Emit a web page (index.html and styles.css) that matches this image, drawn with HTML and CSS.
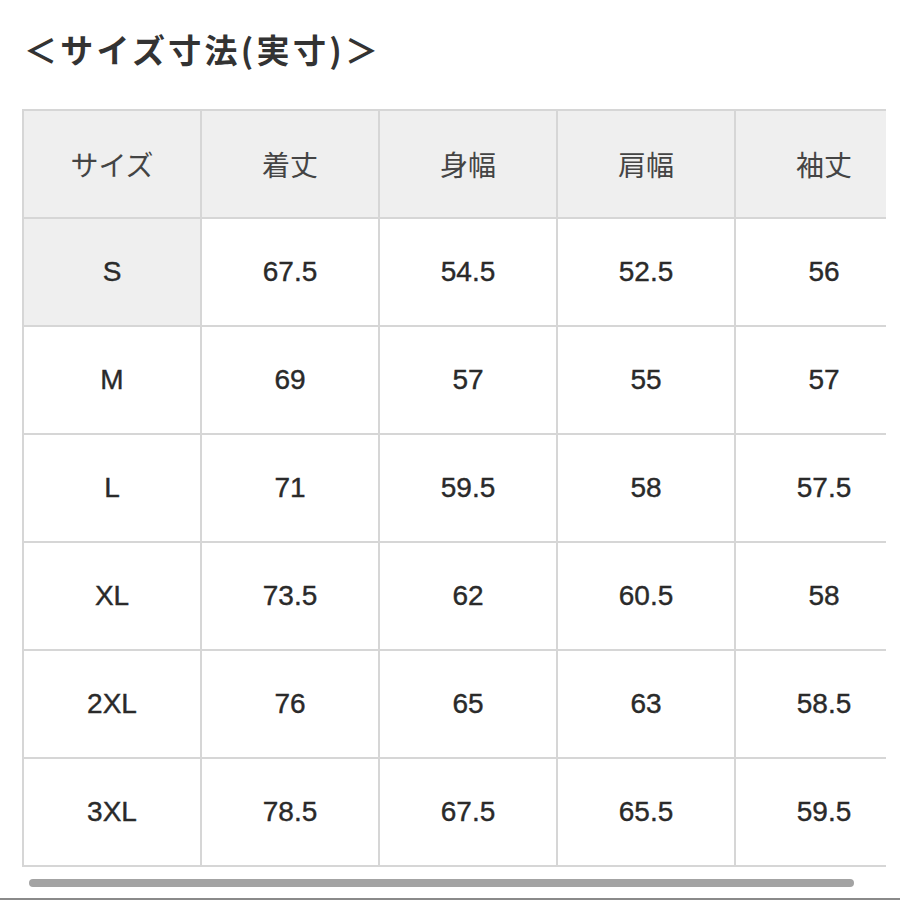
FILE: index.html
```html
<!DOCTYPE html>
<html lang="ja">
<head>
<meta charset="utf-8">
<title>サイズ寸法</title>
<link rel="stylesheet" href="styles.css">
</head>
<body>
<div class="page">
  <h1 class="title">＜サイズ寸法(実寸)＞</h1>
  <div class="scroller">
    <table class="sizes">
      <thead>
        <tr><th>サイズ</th><th>着丈</th><th>身幅</th><th>肩幅</th><th>袖丈</th></tr>
      </thead>
      <tbody>
        <tr><td class="first shaded">S</td><td>67.5</td><td>54.5</td><td>52.5</td><td>56</td></tr>
        <tr><td class="first">M</td><td>69</td><td>57</td><td>55</td><td>57</td></tr>
        <tr><td class="first">L</td><td>71</td><td>59.5</td><td>58</td><td>57.5</td></tr>
        <tr><td class="first">XL</td><td>73.5</td><td>62</td><td>60.5</td><td>58</td></tr>
        <tr><td class="first">2XL</td><td>76</td><td>65</td><td>63</td><td>58.5</td></tr>
        <tr><td class="first">3XL</td><td>78.5</td><td>67.5</td><td>65.5</td><td>59.5</td></tr>
      </tbody>
    </table>
  </div>
  <div class="scrollbar"></div>
</div>
<div class="bottom-line"></div>
</body>
</html>
```

FILE: styles.css
```css
html, body {
  margin: 0;
  padding: 0;
  background: #ffffff;
}
body {
  width: 900px;
  height: 900px;
  position: relative;
  overflow: hidden;
  font-family: "Liberation Sans", "Noto Sans CJK JP", sans-serif;
  color: #333333;
}
.page {
  padding-top: 27px;
}
.title {
  margin: 0 0 0 24px;
  font-family: "Noto Sans CJK JP", sans-serif;
  font-size: 33px;
  font-weight: 700;
  line-height: 44px;
  letter-spacing: 3.3px;
  color: #333333;
}
.scroller {
  margin-top: 38px;
  margin-left: 22px;
  width: 864px;
  overflow: hidden;
}
.sizes {
  border-collapse: collapse;
  table-layout: fixed;
  width: 890px;
}
.sizes th, .sizes td {
  width: 176px;
  height: 106px;
  padding: 0;
  border: 2px solid #d6d6d6;
  text-align: center;
  vertical-align: middle;
  font-size: 28px;
  color: #2a2a2a;
}
.sizes th {
  background: #efefef;
  font-family: "Noto Sans CJK JP", sans-serif;
  font-weight: 400;
  font-size: 28px;
  color: #444444;
}
.sizes td {
  background: #ffffff;
  -webkit-text-stroke: 0.4px #2a2a2a;
}
.sizes td.shaded {
  background: #efefef;
}
.scrollbar {
  margin-top: 12px;
  margin-left: 29px;
  width: 825px;
  height: 8px;
  border-radius: 4px;
  background: #a3a3a3;
}
.bottom-line {
  position: absolute;
  left: 0;
  bottom: 0;
  width: 900px;
  height: 2px;
  background: #8a8a8a;
}
```
